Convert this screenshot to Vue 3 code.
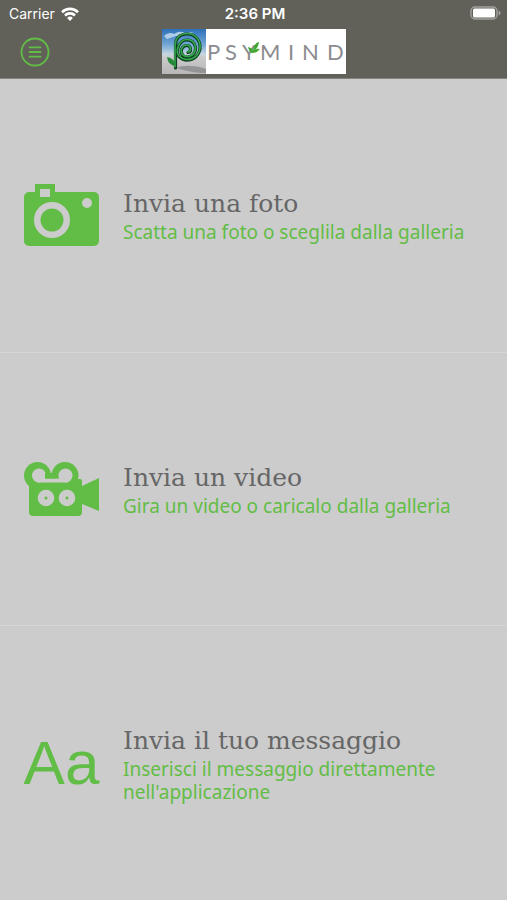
<template>
  <div class="app">
    <header class="header">
      <div class="status-bar">
        <div class="carrier">
          <span>Carrier</span>
          <svg width="18" height="14" viewBox="0 0 18 14" aria-hidden="true">
            <g fill="none" stroke="#fff" stroke-width="2.6">
              <path d="M1 5.2a11.4 11.4 0 0 1 16 0" />
              <path d="M4 8.5a7 7 0 0 1 10 0" />
            </g>
            <path d="M9 14l-2.9-3.1a4.1 4.1 0 0 1 5.8 0z" fill="#fff" />
          </svg>
        </div>
        <time class="clock">2:36 PM</time>
        <svg class="battery" width="31" height="15" viewBox="0 0 31 15" aria-hidden="true">
          <rect x="1" y="1" width="26" height="12" rx="4" fill="none" stroke="#a3a39e" stroke-width="1.4" />
          <rect x="3" y="2.5" width="22" height="9" rx="1.5" fill="#fff" />
          <path d="M28.6 4.5v5q2-.7 2-2.5t-2-2.5z" fill="#a3a39e" />
        </svg>
      </div>
      <div class="nav-bar">
        <button class="menu" type="button" aria-label="Menu">
          <svg width="30" height="30" viewBox="0 0 30 30" fill="none" stroke="#62bd46" aria-hidden="true">
            <circle cx="15" cy="15" r="13.5" stroke-width="1.8" />
            <path d="M9.5 10.3h11M9.5 15h11M9.5 19.7h11" stroke-width="1.8" stroke-linecap="round" />
          </svg>
        </button>
        <svg class="logo" width="184" height="45" viewBox="0 0 184 45" role="img" aria-label="Psymind">
          <defs>
            <linearGradient id="sky" x1="0" y1="0" x2="0" y2="1">
              <stop offset="0" stop-color="#2c70b8" />
              <stop offset=".35" stop-color="#74a8d6" />
              <stop offset=".56" stop-color="#c7d6e2" />
              <stop offset=".64" stop-color="#cbc9ca" />
              <stop offset="1" stop-color="#b9b6b7" />
            </linearGradient>
          </defs>
          <rect width="184" height="45" fill="#fff" />
          <rect width="44" height="45" fill="url(#sky)" />
          <path d="M2 7q5-5 10-2 6-4 11-1l9-1-7 3-11 1-9 3z" fill="#dceaf5" opacity=".7" />
          <path d="M14 39q12-5 30 1v4q-14 0-30-5z" fill="#77787b" opacity=".6" />
          <g fill="none" stroke-linecap="round">
            <path
              d="M13.5 39V18C13 9 18 5 25 5a12.500 13 0 1 1-8 22.500C13 22 17 11 25 11a8 8.500 0 1 1-4 15.500c-4-4-1-10 4-10 4 0 5 6 1 7"
              stroke="#0c4020" stroke-width="3.2"
            />
            <path
              d="M13 38V18C13 9 18 4.500 25 4.500a12.500 13 0 1 1-8 22.500C13 22 17 10.500 25 10.500a8 8.500 0 1 1-4 15.500c-4-4-1-10 4-10 4 0 5 6 1 7"
              stroke="#35a84e" stroke-width="1.6"
            />
          </g>
          <path d="M13 37q-7-1-8-9 6 1 8 6z" fill="#238a38" />
          <text
            x="45 63 80 98 126 140 165" y="31"
            font-family="Lato, sans-serif" font-size="22" font-weight="400" fill="#8c8c8f"
          >PSYMIND</text>
          <path d="M90 24q-3-1-4-6 5 1 5 4 1-8 6-9-1 6-4 8 3-2 5-1-3 4-8 4z" fill="#3fa82f" />
        </svg>
      </div>
    </header>

    <main class="options">
      <a v-for="option in options" :key="option.icon" class="option" href="#">
        <span class="icon">
          <svg v-if="option.icon === 'photo'" width="75" height="62" viewBox="0 0 75 62" aria-hidden="true">
            <path
              fill="#62bd46" fill-rule="evenodd"
              d="M11 0h20v8h39a5 5 0 0 1 5 5v44a5 5 0 0 1-5 5H5a5 5 0 0 1-5-5V13a5 5 0 0 1 5-5h6zM16 5v8h10V5zM28 18a18 18 0 1 0 0 36 18 18 0 0 0 0-36zM63 14a5 5 0 1 0 0 10 5 5 0 0 0 0-10z"
            />
            <circle cx="28" cy="36" r="11.5" fill="#62bd46" />
          </svg>
          <svg v-else-if="option.icon === 'video'" width="75" height="54" viewBox="0 0 75 54" aria-hidden="true">
            <g fill="#62bd46">
              <circle cx="13.5" cy="13.5" r="13.5" />
              <circle cx="41" cy="13.5" r="13.5" />
              <path d="M5 14h49v3h2a2 2 0 0 1 2 2v5l17-8v33l-17-7v8a4 4 0 0 1-4 4H9a4 4 0 0 1-4-4z" />
            </g>
            <g fill="#ccc">
              <circle cx="15" cy="13.5" r="7" />
              <circle cx="41.5" cy="13.5" r="7" />
              <path d="M13 16.5h31v4H13z" />
              <circle cx="22" cy="36" r="8.3" />
              <circle cx="43" cy="36" r="8.3" />
            </g>
            <g fill="#62bd46">
              <path d="M21 11h12v5.5H21z" />
              <circle cx="22" cy="36" r="1.5" />
              <circle cx="43" cy="36" r="1.5" />
            </g>
          </svg>
          <span v-else class="letters" aria-hidden="true">Aa</span>
        </span>
        <span class="text">
          <span class="title">{{ option.title }}</span>
          <span class="subtitle">{{ option.subtitle }}</span>
        </span>
      </a>
    </main>
  </div>
</template>

<script setup>
const options = [
  {
    icon: 'photo',
    title: 'Invia una foto',
    subtitle: 'Scatta una foto o sceglila dalla galleria',
  },
  {
    icon: 'video',
    title: 'Invia un video',
    subtitle: 'Gira un video o caricalo dalla galleria',
  },
  {
    icon: 'message',
    title: 'Invia il tuo messaggio',
    subtitle: "Inserisci il messaggio direttamente nell'applicazione",
  },
]
</script>

<style>
body {
  margin: 0;
  background: #ccc;
}
</style>

<style scoped>
.app {
  display: flex;
  flex-direction: column;
  min-height: 100vh;
  background: #ccc;
}

.header {
  background: #616159;
  border-bottom: 1px solid #85857f;
}

.status-bar,
.nav-bar {
  display: grid;
  grid-template-columns: 1fr auto 1fr;
  align-items: center;
}

.status-bar {
  height: 27px;
  padding: 0 6px 0 9px;
  font-family: Inter, sans-serif;
  font-size: 14px;
  color: #fff;
}

.carrier {
  display: flex;
  align-items: center;
  gap: 6px;
}

.clock {
  font-size: 15px;
  font-weight: 600;
}

.battery {
  justify-self: end;
}

.nav-bar {
  padding: 2px 20px 4px;
}

.menu {
  justify-self: start;
  display: flex;
  padding: 0;
  border: none;
  background: none;
  cursor: pointer;
}

.logo {
  display: block;
}

.options {
  flex: 1;
  display: grid;
  grid-auto-rows: 1fr;
}

.option {
  display: flex;
  align-items: center;
  gap: 24px;
  padding: 0 24px;
  border-bottom: 1px solid #d6d6d6;
  text-decoration: none;
}

.option:last-child {
  border-bottom: none;
}

.icon {
  flex: none;
  display: flex;
  justify-content: center;
  width: 75px;
}

.letters {
  font-family: "Liberation Sans", Arial, sans-serif;
  font-size: 62px;
  line-height: 62px;
  color: #62bd46;
}

.text {
  display: flex;
  flex-direction: column;
  gap: 1px;
  padding-top: 2px;
}

.title {
  font-family: "DejaVu Serif", serif;
  font-size: 25px;
  line-height: 32px;
  color: #666;
}

.subtitle {
  font-family: "Noto Sans", sans-serif;
  font-size: 19px;
  line-height: 23px;
  color: #62bd46;
}
</style>
